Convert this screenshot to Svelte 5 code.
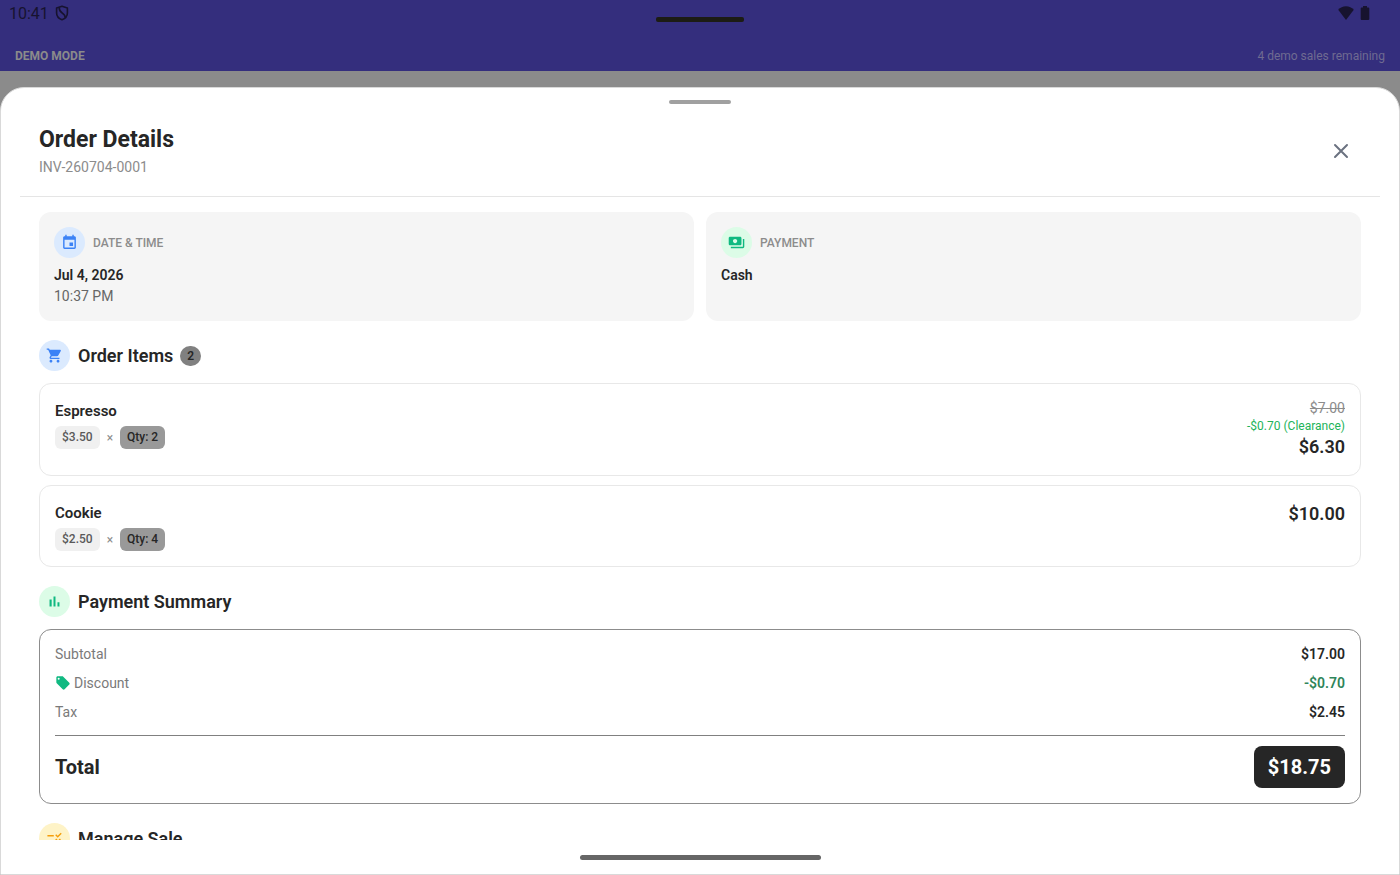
<script>
    const items = [
        { name: 'Espresso', price: '$3.50', qty: 2, original: '$7.00', discount: '-$0.70 (Clearance)', total: '$6.30' },
        { name: 'Cookie', price: '$2.50', qty: 4, total: '$10.00' }
    ];

    const summary = [
        { label: 'Subtotal', value: '$17.00' },
        { label: 'Discount', value: '-$0.70', discount: true },
        { label: 'Tax', value: '$2.45' }
    ];

    const icons = {
        event: 'M17 12h-5v5h5v-5zM16 1v2H8V1H6v2H5c-1.11 0-1.99.9-1.99 2L3 19c0 1.1.89 2 2 2h14c1.1 0 2-.9 2-2V5c0-1.1-.9-2-2-2h-1V1h-2zm3 18H5V8h14v11z',
        payments: 'M19 14V6c0-1.1-.9-2-2-2H3c-1.1 0-2 .9-2 2v8c0 1.1.9 2 2 2h14c1.1 0 2-.9 2-2zm-9-1c-1.66 0-3-1.34-3-3s1.34-3 3-3 3 1.34 3 3-1.34 3-3 3zm13-6v11c0 1.1-.9 2-2 2H4v-2h17V7h2z',
        cart: 'M7 18c-1.1 0-1.99.9-1.99 2S5.9 22 7 22s2-.9 2-2-.9-2-2-2zM1 2v2h2l3.6 7.59-1.35 2.45c-.16.28-.25.61-.25.96 0 1.1.9 2 2 2h12v-2H7.42c-.14 0-.25-.11-.25-.25l.03-.12.9-1.63h7.45c.75 0 1.41-.41 1.75-1.03l3.58-6.49c.08-.14.12-.31.12-.48 0-.55-.45-1-1-1H5.21l-.94-2H1zm16 16c-1.1 0-1.99.9-1.99 2s.89 2 1.99 2 2-.9 2-2-.9-2-2-2z',
        chart: 'M5 9.2h3V19H5zM10.6 5h2.8v14h-2.8zM16.2 13H19v6h-2.8z',
        rule: 'M16.54 11L13 7.46l1.41-1.41 2.12 2.12 4.24-4.24 1.41 1.41L16.54 11zM11 7H2v2h9V7zm10 6.41L19.59 12 17 14.59 14.41 12 13 13.41 15.59 16 13 18.59 14.41 20 17 17.41 19.59 20 21 18.59 18.41 16 21 13.41zM11 15H2v2h9v-2z',
        tag: 'M5.5 7A1.5 1.5 0 0 1 4 5.5 1.5 1.5 0 0 1 5.5 4 1.5 1.5 0 0 1 7 5.5 1.5 1.5 0 0 1 5.5 7m15.91 4.58l-9-9C12.05 2.22 11.55 2 11 2H4c-1.11 0-2 .89-2 2v7c0 .55.22 1.05.59 1.41l8.99 9c.37.36.87.59 1.42.59s1.05-.23 1.41-.59l7-7c.37-.36.59-.86.59-1.41 0-.56-.23-1.06-.59-1.42z'
    };

    let open = true;

    function close() {
        open = false;
    }
</script>

{#snippet badge(icon, tone)}
    <span class="icon-badge {tone}">
        <svg viewBox="0 0 24 24" width="17" height="17" aria-hidden="true"><path d={icons[icon]} /></svg>
    </span>
{/snippet}

<div class="screen">
    <header class="app-bar">
        <div class="status-bar">
            <div class="status-group">
                <span class="clock">10:41</span>
                <svg viewBox="0 0 14 16" width="14" height="16" fill="none" stroke="currentColor" stroke-width="1.6" stroke-linejoin="round" aria-hidden="true">
                    <path d="M7 1.2L12.4 3v5c0 3.200-2.200 5.600-5.400 6.800C3.800 13.600 1.600 11.200 1.600 8V3z" />
                    <path d="M4.200 2.400C4.200 5.600 5 6.600 7.200 8s3 2.600 3 4.600" />
                </svg>
            </div>
            <div class="camera-bar"></div>
            <div class="status-group right">
                <svg viewBox="0 0 16 14" width="16" height="14" fill="currentColor" aria-hidden="true">
                    <path d="M8 14L.2 3.800C2.200 1.600 4.900.2 8 .2s5.800 1.400 7.800 3.600z" />
                </svg>
                <svg viewBox="0 0 10 14" width="10" height="14" fill="currentColor" aria-hidden="true">
                    <path d="M3 0h4v1.400h1.400c.5 0 .9.400.9.900v10.800c0 .5-.4.900-.9.900H1.600c-.5 0-.9-.4-.9-.9V2.300c0-.5.4-.9.9-.9H3z" />
                </svg>
            </div>
        </div>
        <div class="demo-bar">
            <strong>DEMO MODE</strong>
            <span>4 demo sales remaining</span>
        </div>
    </header>

    {#if open}
        <section class="sheet" aria-labelledby="sheet-title">
            <div class="handle"></div>
            <div class="sheet-header">
                <div>
                    <h1 id="sheet-title">Order Details</h1>
                    <p class="invoice">INV-260704-0001</p>
                </div>
                <button class="close" aria-label="Close" onclick={close}>
                    <svg viewBox="0 0 24 24" width="24" height="24" fill="none" stroke="currentColor" stroke-width="2" stroke-linecap="round" aria-hidden="true">
                        <path d="M6 6l12 12M18 6L6 18" />
                    </svg>
                </button>
            </div>

            <div class="content">
                <div class="info-row">
                    <div class="info-card">
                        <div class="info-label">{@render badge('event', 'blue')}DATE &amp; TIME</div>
                        <p class="info-value">Jul 4, 2026</p>
                        <p class="info-sub">10:37 PM</p>
                    </div>
                    <div class="info-card">
                        <div class="info-label">{@render badge('payments', 'green')}PAYMENT</div>
                        <p class="info-value">Cash</p>
                    </div>
                </div>

                <h2>{@render badge('cart', 'blue')}Order Items<span class="count">{items.length}</span></h2>
                <div class="items">
                    {#each items as item}
                        <div class="item">
                            <div>
                                <h3>{item.name}</h3>
                                <div class="item-meta">
                                    <span class="chip">{item.price}</span>
                                    <span class="times">×</span>
                                    <span class="chip dark">Qty: {item.qty}</span>
                                </div>
                            </div>
                            <div class="item-amounts">
                                {#if item.original}
                                    <s>{item.original}</s>
                                    <span class="item-discount">{item.discount}</span>
                                {/if}
                                <strong>{item.total}</strong>
                            </div>
                        </div>
                    {/each}
                </div>

                <h2>{@render badge('chart', 'green')}Payment Summary</h2>
                <dl class="summary">
                    {#each summary as row}
                        <div class="summary-row" class:discount={row.discount}>
                            <dt>
                                {#if row.discount}
                                    <svg viewBox="0 0 24 24" width="16" height="16" aria-hidden="true"><path d={icons.tag} /></svg>
                                {/if}
                                {row.label}
                            </dt>
                            <dd>{row.value}</dd>
                        </div>
                    {/each}
                    <div class="total-row">
                        <dt>Total</dt>
                        <dd>$18.75</dd>
                    </div>
                </dl>

                <h2>{@render badge('rule', 'amber')}Manage Sale</h2>
            </div>

            <div class="nav-bar"><div class="home-indicator"></div></div>
        </section>
    {/if}
</div>

<style>
    :global(body) {
        margin: 0;
    }

    .screen {
        display: flex;
        flex-direction: column;
        height: 100vh;
        overflow: hidden;
        background: #8b8b8b;
        color: #262626;
        font-family: Roboto, "Liberation Sans", sans-serif;
    }

    h1, h2, h3, p, dl, dt, dd {
        margin: 0;
    }

    /* App bar */
    .app-bar {
        flex: none;
        background: #342e7d;
    }

    .status-bar {
        display: grid;
        grid-template-columns: 1fr auto 1fr;
        align-items: center;
        height: 26px;
        padding: 0 30px 0 9px;
        color: #17132f;
    }

    .status-group {
        display: flex;
        align-items: center;
        gap: 6px;
    }

    .status-group.right {
        justify-content: flex-end;
    }

    .clock {
        padding-top: 1px;
        font-size: 16px;
        line-height: 20px;
    }

    .camera-bar {
        align-self: end;
        width: 88px;
        height: 5px;
        margin: 0 0 4px 21px;
        border-radius: 2px;
        background: #1c1c14;
    }

    .demo-bar {
        display: flex;
        justify-content: space-between;
        align-items: center;
        padding: 22px 15px 6px;
        font-size: 12px;
        line-height: 17px;
        color: #6f6b91;
    }

    .demo-bar strong {
        font-weight: 700;
        color: #8b8b8b;
    }

    /* Bottom sheet */
    .sheet {
        flex: 1;
        display: flex;
        flex-direction: column;
        min-height: 0;
        margin-top: 16px;
        border: 1px solid #d9d9d9;
        border-radius: 24px 24px 0 0;
        background: #fff;
    }

    .handle {
        flex: none;
        align-self: center;
        width: 62px;
        height: 4px;
        margin-top: 12px;
        border-radius: 2px;
        background: #a0a0a0;
    }

    .sheet-header {
        flex: none;
        display: flex;
        justify-content: space-between;
        align-items: center;
        margin: 0 19px;
        padding: 20px 20px 19px 19px;
        border-bottom: 1px solid #e5e5e5;
    }

    h1 {
        font-size: 23px;
        line-height: 31px;
        font-weight: 700;
    }

    .invoice {
        margin-top: 3px;
        font-size: 14px;
        line-height: 19px;
        color: #8c8c8c;
    }

    .close {
        display: flex;
        padding: 7px;
        border: 0;
        background: none;
        color: #6b7280;
        cursor: pointer;
    }

    .content {
        flex: 1;
        min-height: 0;
        overflow: hidden;
        padding: 15px 38px 0;
    }

    .icon-badge {
        display: flex;
        align-items: center;
        justify-content: center;
        width: 31px;
        height: 31px;
        margin-right: 8px;
        border-radius: 50%;
    }

    .icon-badge svg {
        fill: currentColor;
    }

    .blue {
        background: #dbeafe;
        color: #3b82f6;
    }

    .green {
        background: #dcfce7;
        color: #10b981;
    }

    .amber {
        background: #fef3c7;
        color: #f59e0b;
    }

    .info-row {
        display: flex;
        gap: 12px;
    }

    .info-card {
        flex: 1;
        padding: 15px;
        border-radius: 12px;
        background: #f5f5f5;
    }

    .info-label {
        display: flex;
        align-items: center;
        margin-bottom: 7px;
        font-size: 12px;
        font-weight: 500;
        color: #8c8c8c;
    }

    .info-value {
        font-size: 14px;
        line-height: 20px;
        font-weight: 600;
    }

    .info-sub {
        margin-top: 2px;
        font-size: 14px;
        line-height: 19px;
        color: #666;
    }

    h2 {
        display: flex;
        align-items: center;
        margin: 19px 0 12px;
        font-size: 18px;
        line-height: 24px;
        font-weight: 600;
    }

    .count {
        margin-left: 7px;
        padding: 0 7px;
        border-radius: 10px;
        background: #808080;
        font-size: 12px;
        line-height: 20px;
    }

    .items {
        display: flex;
        flex-direction: column;
        gap: 9px;
    }

    .item {
        display: flex;
        justify-content: space-between;
        padding: 15px;
        border: 1px solid #e8e8e8;
        border-radius: 12px;
    }

    h3 {
        margin-top: 2px;
        font-size: 15px;
        line-height: 20px;
        font-weight: 600;
    }

    .item-meta {
        display: flex;
        align-items: center;
        gap: 7px;
        margin-top: 5px;
    }

    .chip {
        padding: 0 7px;
        border-radius: 6px;
        background: #f0f0f0;
        font-size: 12px;
        line-height: 23px;
        font-weight: 500;
        color: #595959;
    }

    .chip.dark {
        background: #999;
        color: #262626;
    }

    .times {
        font-size: 12px;
        line-height: 16px;
        color: #8c8c8c;
    }

    .item-amounts {
        display: flex;
        flex-direction: column;
        align-items: flex-end;
    }

    .item-amounts s {
        font-size: 14px;
        line-height: 19px;
        color: #8c8c8c;
    }

    .item-discount {
        font-size: 12px;
        line-height: 16px;
        color: #22b35a;
    }

    .item-amounts strong {
        font-size: 18px;
        line-height: 26px;
        font-weight: 600;
    }

    .summary {
        padding: 14px 15px 15px;
        border: 1px solid #8c8c8c;
        border-radius: 12px;
    }

    .summary-row {
        display: flex;
        justify-content: space-between;
        margin-bottom: 9px;
        font-size: 14px;
        line-height: 20px;
    }

    .summary-row dt {
        display: flex;
        align-items: center;
        gap: 3px;
        color: #7a7a7a;
    }

    .summary-row dd {
        font-weight: 600;
    }

    .summary-row svg {
        fill: #10b981;
    }

    .discount dd {
        color: #2f855a;
    }

    .total-row {
        display: flex;
        justify-content: space-between;
        align-items: center;
        margin-top: 13px;
        padding-top: 10px;
        border-top: 1px solid #808080;
        font-size: 20px;
        line-height: 26px;
        font-weight: 700;
    }

    .total-row dd {
        padding: 8px 14px;
        border-radius: 8px;
        background: #262626;
        color: #fff;
    }

    .nav-bar {
        flex: none;
        display: flex;
        justify-content: center;
        padding: 15px 0 14px;
    }

    .home-indicator {
        width: 241px;
        height: 5px;
        border-radius: 3px;
        background: #666;
    }
</style>
